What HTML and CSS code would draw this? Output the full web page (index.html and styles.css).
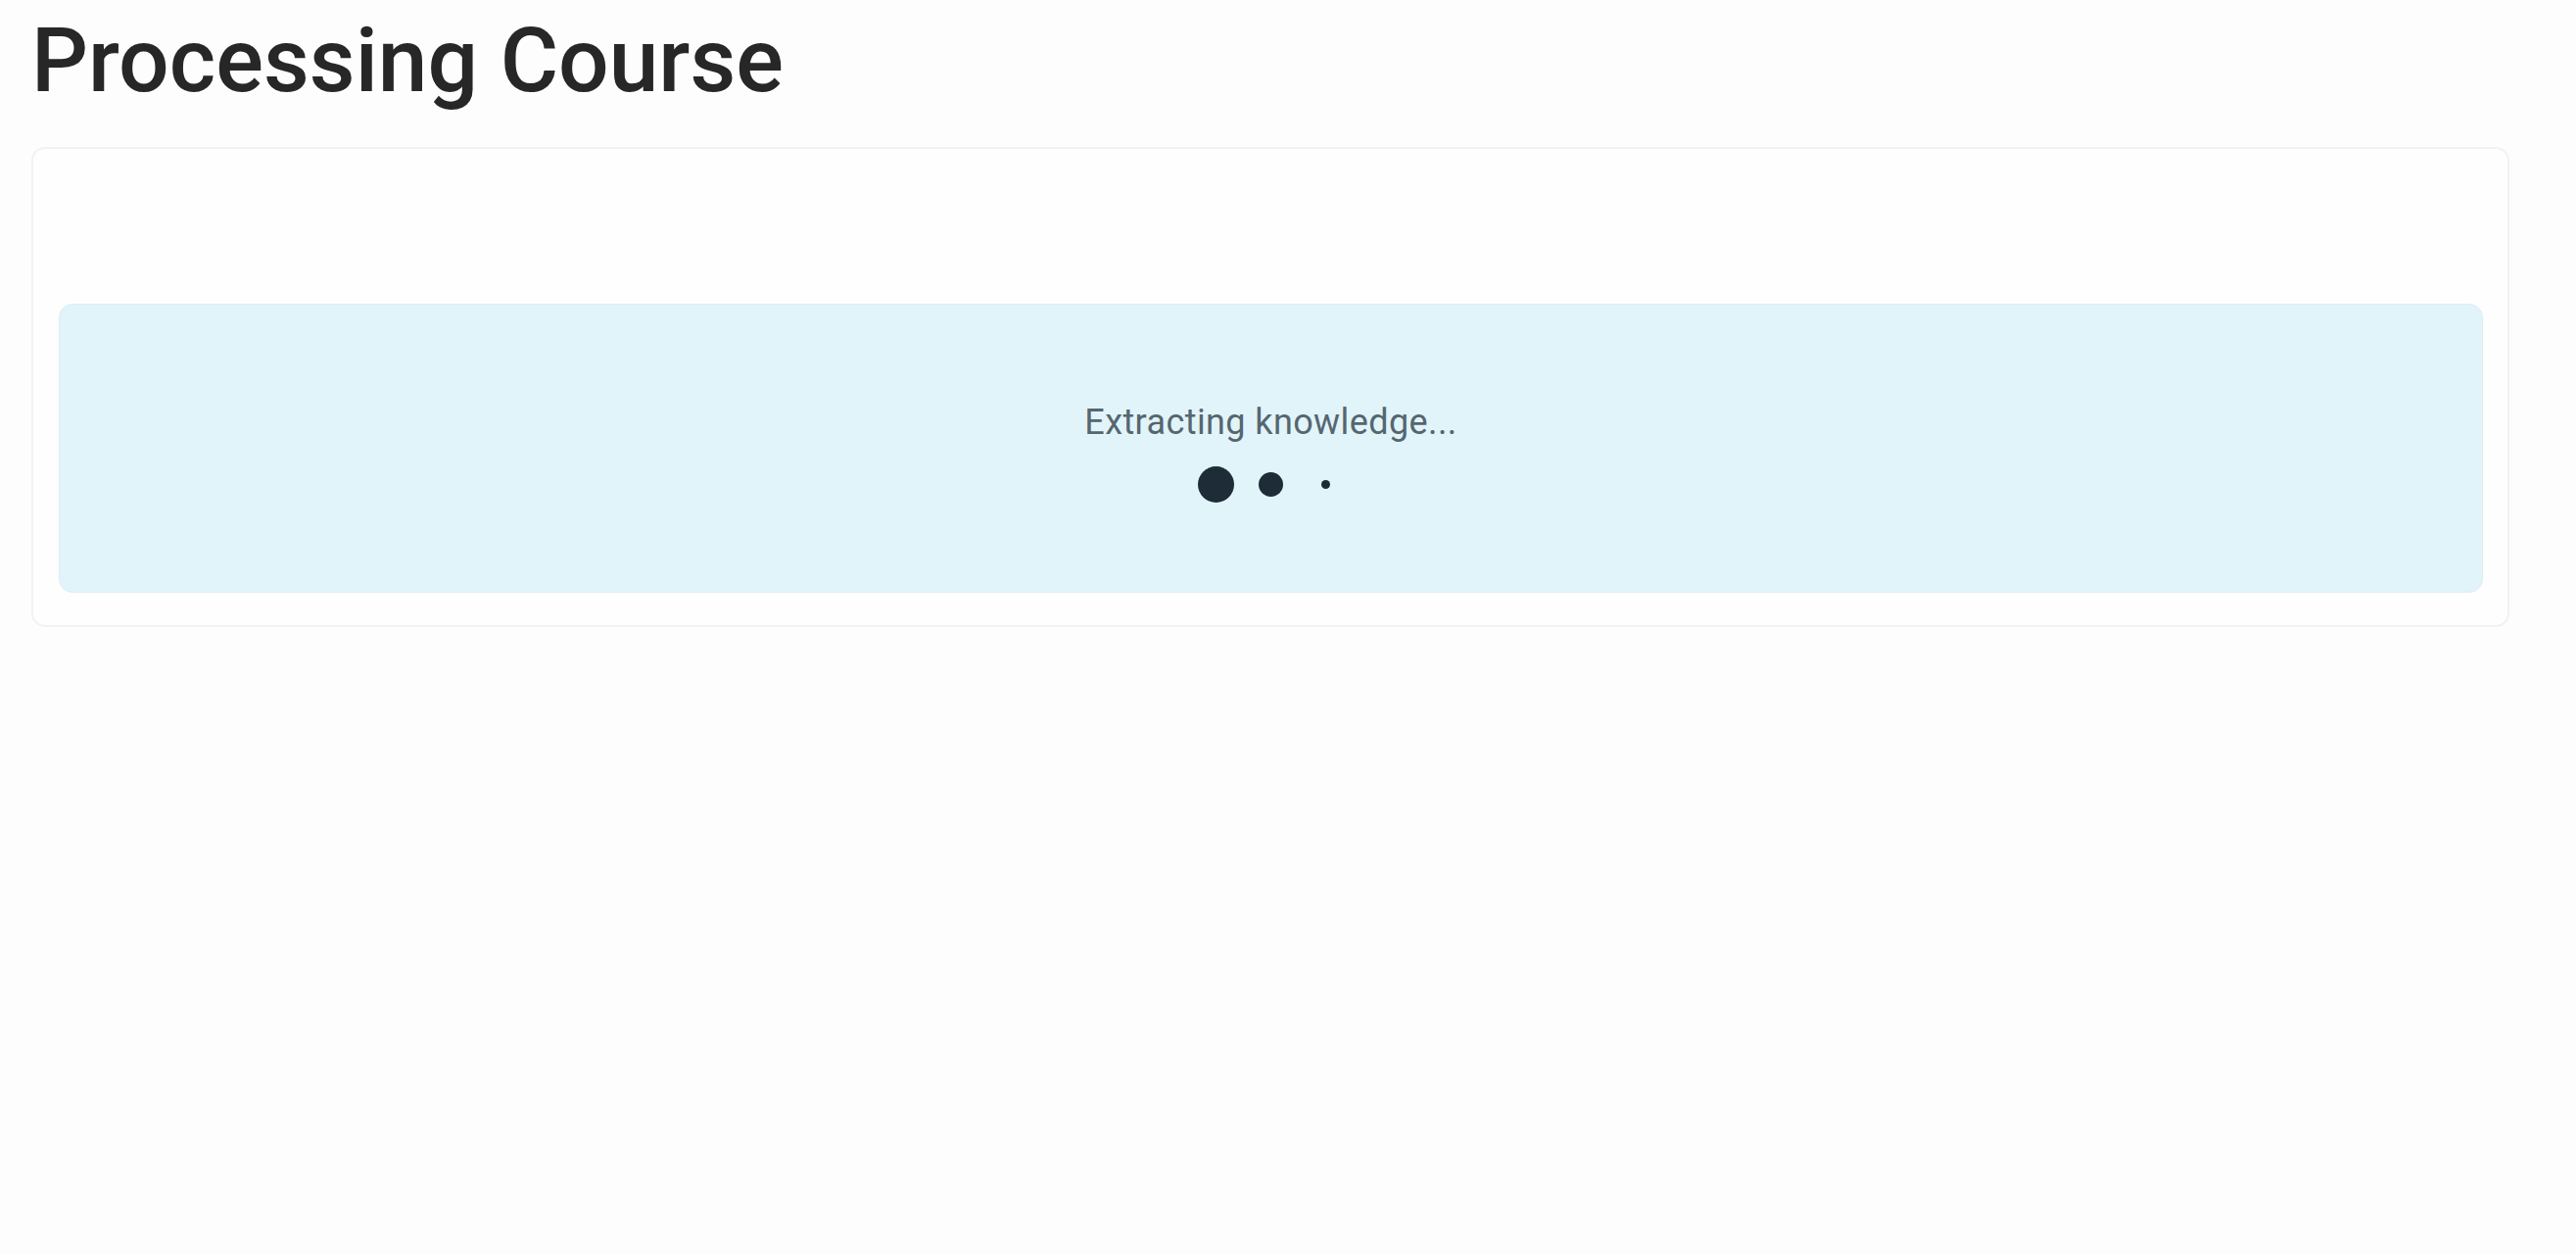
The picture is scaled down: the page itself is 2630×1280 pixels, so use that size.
FILE: index.html
```html
<!DOCTYPE html>
<html lang="en">
<head>
<meta charset="utf-8">
<title>Processing Course</title>
<link rel="stylesheet" href="styles.css">
</head>
<body>
<main class="page">
  <h1 class="title">Processing Course</h1>
  <section class="card">
    <div class="status">
      <p class="status-text">Extracting knowledge...</p>
      <div class="dots">
        <span class="slot"><span class="dot dot-lg"></span></span>
        <span class="slot"><span class="dot dot-md"></span></span>
        <span class="slot"><span class="dot dot-sm"></span></span>
      </div>
    </div>
  </section>
</main>
</body>
</html>
```
FILE: styles.css
```css
html, body {
  margin: 0;
  padding: 0;
  background: #fdfdfd;
}
body {
  font-family: Roboto, "Liberation Sans", sans-serif;
  color: #262626;
}
.page {
  padding: 0 68px 0 32px;
}
.title {
  margin: 2px 0 0 0;
  padding-left: 0;
  font-size: 91px;
  font-weight: 500;
  line-height: 120px;
  letter-spacing: 0;
  color: #272727;
}
.card {
  margin-top: 28px;
  background: #fefefe;
  border: 2px solid #f2f2f3;
  border-radius: 14px;
  padding: 158px 25px 33px 26px;
}
.status {
  background: #e1f4fa;
  border: 1px solid #dcedf4;
  border-radius: 14px;
  height: 295px;
  box-sizing: border-box;
  display: flex;
  flex-direction: column;
  align-items: center;
  padding-top: 98px;
}
.status-text {
  margin: 0;
  font-size: 36px;
  line-height: 44px;
  letter-spacing: 0.4px;
  color: #56666f;
}
.dots {
  display: flex;
  align-items: center;
  gap: 20px;
  margin-top: 21px;
  height: 40px;
}
.slot {
  width: 36px;
  height: 40px;
  display: flex;
  align-items: center;
  justify-content: center;
}
.dot {
  display: block;
  flex: none;
  border-radius: 50%;
  background: #1e2c37;
}
.dot-lg {
  width: 37px;
  height: 37px;
}
.dot-md {
  width: 25px;
  height: 25px;
}
.dot-sm {
  width: 9px;
  height: 9px;
}
```
